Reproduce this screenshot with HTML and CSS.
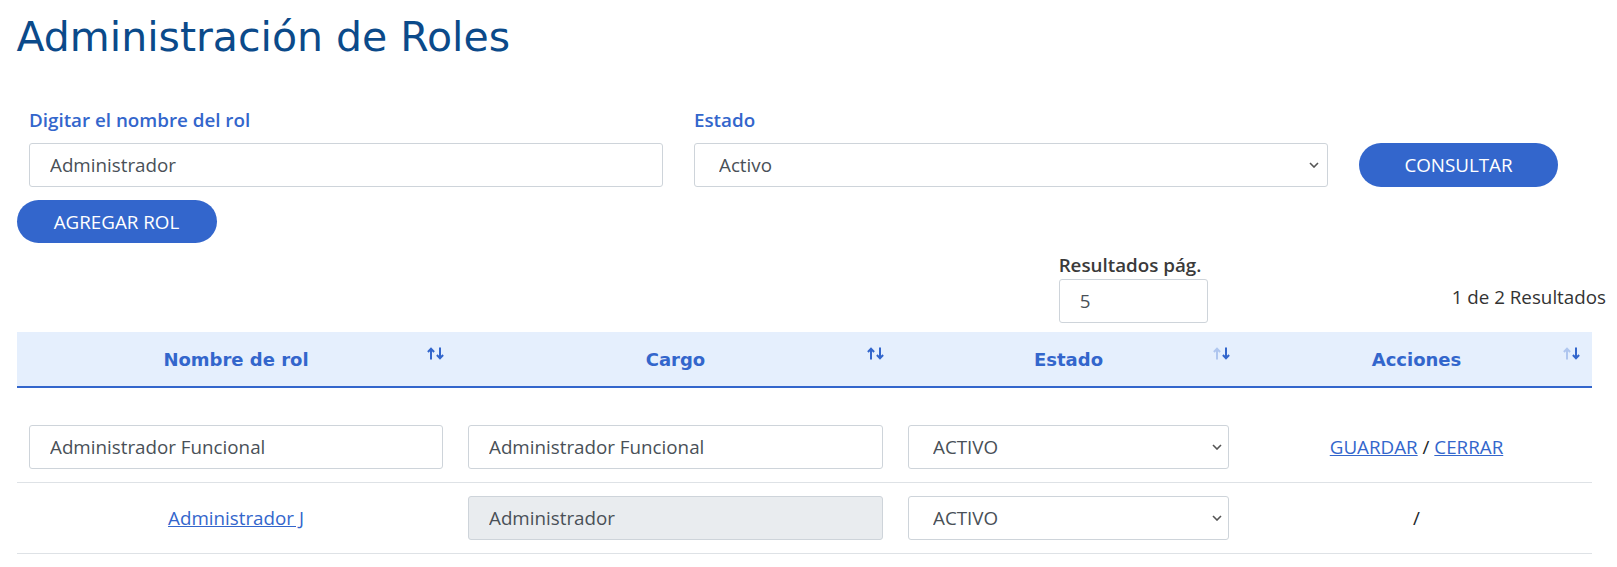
FILE: index.html
```html
<!DOCTYPE html>
<html lang="es">
<head>
<meta charset="utf-8">
<title>Administración de Roles</title>
<link rel="stylesheet" href="styles.css">
</head>
<body>
<div class="page">
  <h1 class="title">Administración de Roles</h1>

  <div class="filters">
    <div class="field field-name">
      <label class="field-label">Digitar el nombre del rol</label>
      <input class="control" type="text" value="Administrador">
    </div>
    <div class="field field-state">
      <label class="field-label">Estado</label>
      <div class="select-wrap">
        <select class="control select"><option>Activo</option></select>
        <svg class="chev" width="10" height="6" viewBox="0 0 10 6"><polyline points="1,1 5,5 9,1" fill="none" stroke="#555" stroke-width="1.6"/></svg>
      </div>
    </div>
    <button class="btn btn-consultar">CONSULTAR</button>
  </div>

  <button class="btn btn-add">AGREGAR ROL</button>

  <div class="results">
    <div class="per-page">
      <label class="per-page-label">Resultados pág.</label>
      <input class="control per-page-input" type="text" value="5">
    </div>
    <div class="count">1 de 2 Resultados</div>
  </div>

  <table class="roles">
    <colgroup>
      <col class="c1"><col class="c2"><col class="c3"><col class="c4">
    </colgroup>
    <thead>
      <tr>
        <th>Nombre de rol
          <svg class="sort" width="17" height="13" viewBox="0 0 17 13"><g fill="none" stroke="#3366cc" stroke-width="2"><path d="M4 12.5V1.8M0.9 5L4 1.8L7.1 5"/><path d="M13 0.5V11.2M9.9 8L13 11.2L16.1 8"/></g></svg>
        </th>
        <th>Cargo
          <svg class="sort" width="17" height="13" viewBox="0 0 17 13"><g fill="none" stroke="#3366cc" stroke-width="2"><path d="M4 12.5V1.8M0.9 5L4 1.8L7.1 5"/><path d="M13 0.5V11.2M9.9 8L13 11.2L16.1 8"/></g></svg>
        </th>
        <th>Estado
          <svg class="sort" width="17" height="13" viewBox="0 0 17 13"><g fill="none" stroke-width="2"><path stroke="#afc6ef" d="M4 12.5V1.8M0.9 5L4 1.8L7.1 5"/><path stroke="#3366cc" d="M13 0.5V11.2M9.9 8L13 11.2L16.1 8"/></g></svg>
        </th>
        <th>Acciones
          <svg class="sort" width="17" height="13" viewBox="0 0 17 13"><g fill="none" stroke-width="2"><path stroke="#afc6ef" d="M4 12.5V1.8M0.9 5L4 1.8L7.1 5"/><path stroke="#3366cc" d="M13 0.5V11.2M9.9 8L13 11.2L16.1 8"/></g></svg>
        </th>
      </tr>
    </thead>
    <tbody>
      <tr class="gap"><td colspan="4"></td></tr>
      <tr class="row">
        <td><input class="control" type="text" value="Administrador Funcional"></td>
        <td><input class="control" type="text" value="Administrador Funcional"></td>
        <td>
          <div class="select-wrap">
            <select class="control select row-select"><option>ACTIVO</option></select>
            <svg class="chev chev-row" width="10" height="6" viewBox="0 0 10 6"><polyline points="1,1 5,5 9,1" fill="none" stroke="#555" stroke-width="1.6"/></svg>
          </div>
        </td>
        <td class="actions"><a href="#" class="link">GUARDAR</a> / <a href="#" class="link">CERRAR</a></td>
      </tr>
      <tr class="row">
        <td class="center"><a href="#" class="link">Administrador J</a></td>
        <td><input class="control disabled" type="text" value="Administrador" disabled></td>
        <td>
          <div class="select-wrap">
            <select class="control select row-select"><option>ACTIVO</option></select>
            <svg class="chev chev-row" width="10" height="6" viewBox="0 0 10 6"><polyline points="1,1 5,5 9,1" fill="none" stroke="#555" stroke-width="1.6"/></svg>
          </div>
        </td>
        <td class="actions">/</td>
      </tr>
    </tbody>
  </table>
</div>
</body>
</html>
```

FILE: styles.css
```css
* { box-sizing: border-box; }

html, body {
  margin: 0;
  padding: 0;
  background: #ffffff;
}

body {
  font-family: "Open Sans", "Noto Sans", sans-serif;
  font-size: 18.8px;
  color: #212529;
}

.page {
  padding: 13px 11px 0 16.5px;
}

.title {
  margin: 0;
  font-family: "DejaVu Sans", sans-serif;
  font-weight: normal;
  font-size: 41px;
  line-height: 48px;
  color: #0b4a8a;
}

.filters {
  display: flex;
  align-items: flex-end;
  gap: 31px;
  margin-top: 45px;
  padding-left: 12.5px;
}

.field {
  display: flex;
  flex-direction: column;
}

.field-name,
.field-state {
  width: 634px;
}

.field-label {
  font-weight: 600;
  color: #3366cc;
  line-height: 28px;
  margin-bottom: 9px;
}

.control {
  display: block;
  width: 100%;
  height: 44px;
  padding: 0 20px;
  border: 1px solid #ced4da;
  border-radius: 3px;
  background: #ffffff;
  font-family: "Open Sans", "Noto Sans", sans-serif;
  font-size: 18.8px;
  color: #495057;
  outline: none;
}

.select-wrap {
  position: relative;
}

.select {
  appearance: none;
  -webkit-appearance: none;
  padding-left: 24px;
}

.chev {
  position: absolute;
  right: 9px;
  top: 19px;
}

.chev-row {
  right: 7px;
}

.btn {
  border: none;
  background: #3366cc;
  color: #ffffff;
  font-family: "Open Sans", "Noto Sans", sans-serif;
  font-size: 18.8px;
  border-radius: 22px;
  cursor: pointer;
}

.btn-consultar {
  width: 199px;
  height: 44px;
}

.btn-add {
  display: block;
  width: 200px;
  height: 43px;
  margin-top: 13px;
}

.results {
  display: flex;
  justify-content: flex-end;
  align-items: flex-end;
  margin-top: 8px;
}

.per-page {
  display: flex;
  flex-direction: column;
  width: 149px;
}

.per-page-label {
  font-weight: 600;
  color: #3a3a3a;
  line-height: 28px;
  white-space: nowrap;
}

.per-page-input {
  width: 149px;
}

.count {
  margin-left: 244px;
  padding-bottom: 12px;
  color: #333333;
  line-height: 28px;
  white-space: nowrap;
}

.roles {
  margin-top: 9px;
  width: 1575px;
  border-collapse: collapse;
  table-layout: fixed;
}

.c1 { width: 439px; }
.c2 { width: 440px; }
.c3 { width: 346px; }
.c4 { width: 350px; }

.roles th {
  position: relative;
  height: 55px;
  background: #e5effd;
  border-bottom: 2px solid #3366cc;
  font-family: "DejaVu Sans", sans-serif;
  font-weight: bold;
  font-size: 18px;
  color: #3366cc;
  text-align: center;
  vertical-align: middle;
  padding: 0;
}

.sort {
  position: absolute;
  right: 12px;
  top: 15px;
}

.gap td {
  height: 25px;
  padding: 0;
}

.row td {
  padding: 13px 12.5px;
  border-bottom: 1px solid #dee2e6;
  vertical-align: middle;
}

.center {
  text-align: center;
}

.actions {
  text-align: center;
  color: #212529;
}

.link {
  color: #3366cc;
  text-decoration: underline;
}

.disabled {
  background: #e9ecef;
}
```
